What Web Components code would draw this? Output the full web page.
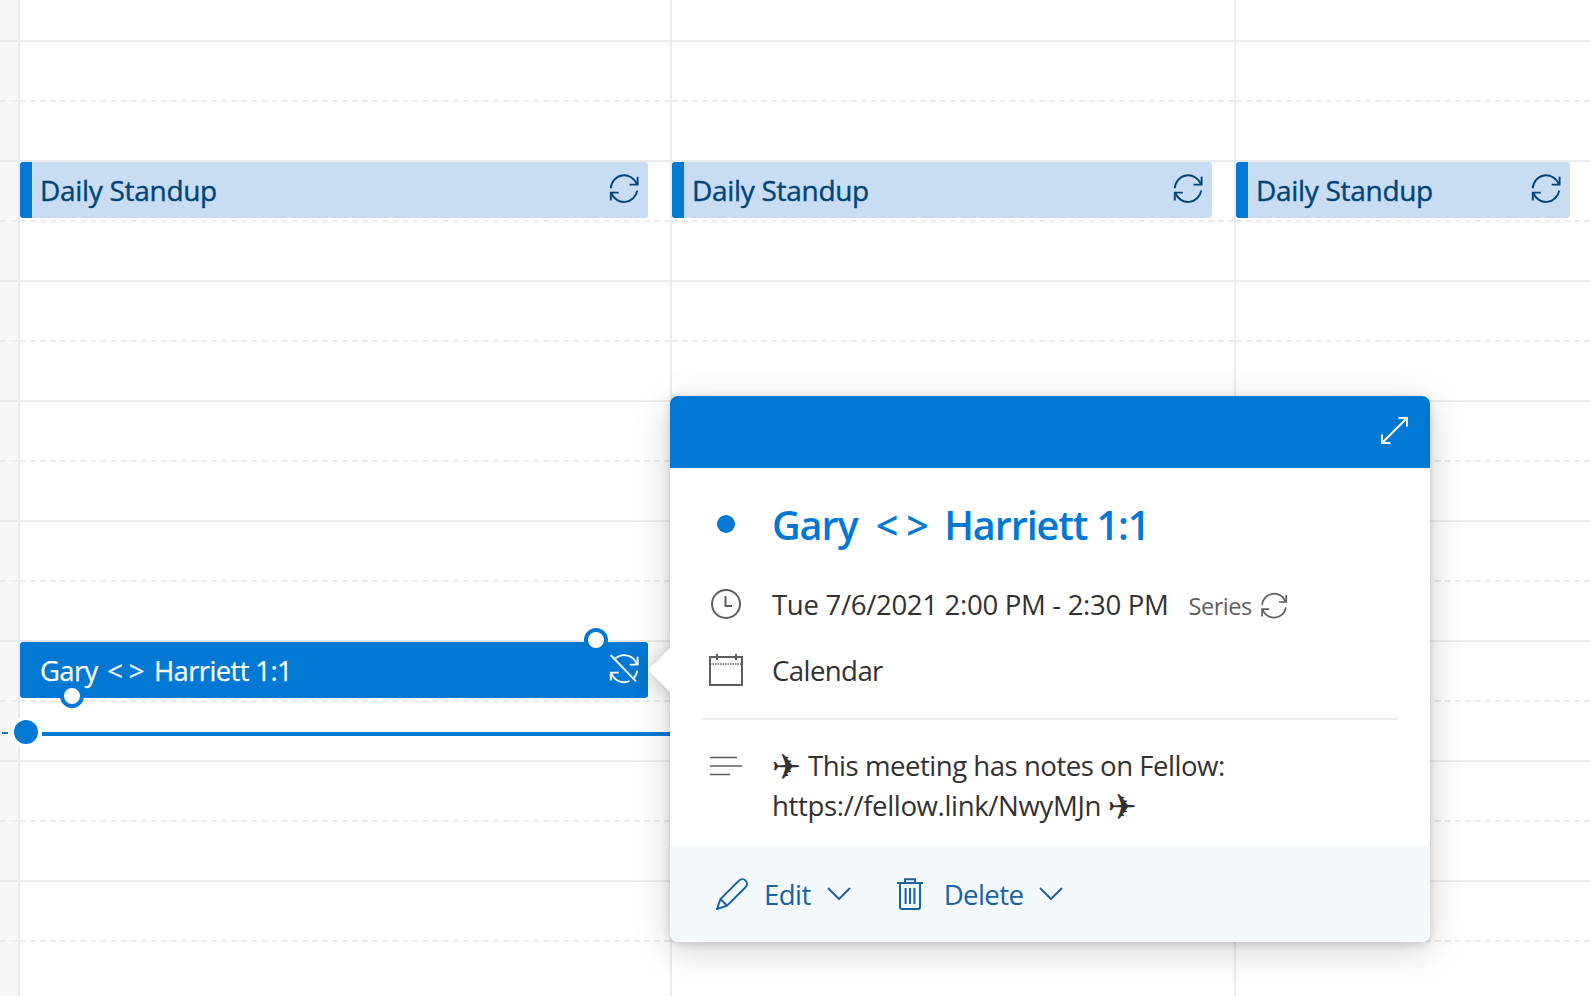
<!DOCTYPE html>
<html lang="en">
<head>
<meta charset="utf-8">
<title>Calendar</title>
<style>
html,body{margin:0;padding:0;background:#fff;height:996px;overflow:hidden;font-family:"Open Sans","Noto Sans",sans-serif;}
</style>
</head>
<body>
<cal-app>
  <cal-day slot="day" rail></cal-day>
  <cal-day slot="day" style="--gutter:22px">
    <cal-event slot="r3">Daily Standup</cal-event>
    <cal-event slot="r11" selected>Gary <span style="letter-spacing:6px;margin:0 -3px 0 3px">&lt;&gt;</span> Harriett 1:1</cal-event>
  </cal-day>
  <cal-day slot="day" style="--gutter:22px">
    <cal-event slot="r3">Daily Standup</cal-event>
  </cal-day>
  <cal-day slot="day" style="--gutter:20px" last>
    <cal-event slot="r3">Daily Standup</cal-event>
  </cal-day>
  <now-line slot="overlay"></now-line>
  <event-card slot="overlay"></event-card>
</cal-app>

<script>
const ICONS = {
  sync: `<svg viewBox="0 0 28 29" width="28" height="29" fill="none" stroke="currentColor" stroke-width="1.9" overflow="visible"><path d="M0.8 14.2A13.4 13.4 0 0 1 26.8 10.2"/><path d="M27.6 2.8V10.6H19.6"/><path d="M27.2 16.6A13.4 13.4 0 0 1 1.4 19.2"/><path d="M0.8 26.6V18.6H8.8"/></svg>`,
  syncOff: `<svg viewBox="0 0 28 29" width="28" height="29" fill="none" stroke="currentColor" stroke-width="1.9" overflow="visible"><path d="M5.4 4.4A13.4 13.4 0 0 1 26.8 10.2"/><path d="M27.6 2.8V10.6H19.6"/><path d="M27.2 16.6A13.4 13.4 0 0 1 24 23.8M19.6 27A13.4 13.4 0 0 1 1.4 19.2"/><path d="M0.8 26.6V18.6H8.8"/><path d="M0.6 1L26 27.4"/></svg>`,
  expand: `<svg viewBox="0 0 27 27" width="27" height="27" fill="none" stroke="currentColor" stroke-width="2"><path d="M17.5 1H26V9.5M1 17.5V26H9.5M1.5 25.5L25.5 1.5"/></svg>`,
  clock: `<svg viewBox="0 0 30 30" width="30" height="30" fill="none" stroke="currentColor" stroke-width="2"><circle cx="15" cy="15" r="14"/><path d="M14.5 7V17H21"/></svg>`,
  calendar: `<svg viewBox="0 0 34 32" width="34" height="32" fill="none" stroke="currentColor" stroke-width="2"><rect x="1" y="3" width="32" height="28"/><path d="M8 0V6M27 0V6"/><path d="M1 10H33" stroke-dasharray="1.5 1" stroke-width="1.5"/></svg>`,
  lines: `<svg viewBox="0 0 32 20" width="32" height="20" fill="none" stroke="currentColor" stroke-width="1.6"><path d="M0 1.5H27M0 10H32M0 18.5H20"/></svg>`,
  pencil: `<svg viewBox="0 0 32 32" width="32" height="32" fill="none" stroke="currentColor" stroke-width="2"><path d="M1 31L4.5 21L23 2.6A4.6 4.6 0 0 1 29.5 9.2L11 27.7Z"/><path d="M4.5 21L11 27.7"/></svg>`,
  trash: `<svg viewBox="0 0 26 32" width="26" height="32" fill="none" stroke="currentColor" stroke-width="2"><path d="M0 5H26"/><path d="M8 5V1.2H18V5"/><path d="M3 5V29A2 2 0 0 0 5 31H21A2 2 0 0 0 23 29V5"/><path d="M8.6 10V26M13 10V26M17.4 10V26"/></svg>`,
  chevron: `<svg viewBox="0 0 24 13" width="24" height="13" fill="none" stroke="currentColor" stroke-width="2"><path d="M1 1L12 12L23 1"/></svg>`
};

class CalIcon extends HTMLElement {
  connectedCallback(){
    if(this.shadowRoot) return;
    const r = this.attachShadow({mode:'open'});
    r.innerHTML = `<style>:host{display:inline-flex;line-height:0;flex:none}</style>${ICONS[this.getAttribute('name')]||''}`;
  }
}
customElements.define('cal-icon', CalIcon);

class CalApp extends HTMLElement {
  constructor(){
    super();
    this.attachShadow({mode:'open'}).innerHTML = `<style>
      :host{display:block;position:relative;width:1590px;height:996px;overflow:hidden;background:#fff}
      .days{display:grid;grid-template-columns:20px 652px 564px 1fr;height:100%}
    </style><div class="days"><slot name="day"></slot></div><slot name="overlay"></slot>`;
  }
}
customElements.define('cal-app', CalApp);

class CalDay extends HTMLElement {
  constructor(){
    super();
    let rows = '';
    for(let i=0;i<=16;i++){
      rows += `<div class="cell ${i%2?'dash':'solid'} ${i===0?'first':''}"><slot name="r${i}"></slot></div>`;
    }
    this.attachShadow({mode:'open'}).innerHTML = `<style>
      :host{display:block;box-sizing:border-box;min-width:0;border-right:2px solid #ebebeb;height:1002px}
      :host([rail]){background:#f8f8f8}
      :host([last]){border-right:0}
      .cell{box-sizing:border-box;height:60px;padding-right:var(--gutter,0);border-bottom:2px #ebebeb}
      .solid{border-bottom-style:solid}
      .dash{border-bottom-style:dashed}
      .first{height:42px}
    </style>${rows}`;
  }
}
customElements.define('cal-day', CalDay);

class CalEvent extends HTMLElement {
  connectedCallback(){
    if(this.shadowRoot) return;
    const sel = this.hasAttribute('selected');
    const r = this.attachShadow({mode:'open'});
    r.innerHTML = `<style>
      :host{display:flex;box-sizing:border-box;position:relative;height:56px;align-items:center;justify-content:space-between;
        border-radius:3px;background:#c8dcf4;color:#004578;border-left:12px solid #0078d4;padding:0 10px 0 8px;
        font:400 28px/36px "Open Sans","Noto Sans",sans-serif;letter-spacing:-.3px;-webkit-text-stroke:.4px currentColor}
      :host([selected]){background:#0078d4;color:#fff;font-size:27.4px;letter-spacing:-.6px;-webkit-text-stroke:.25px currentColor}
      :host([selected]) .t{margin-top:1px}
      .t{white-space:nowrap;margin-top:0}
      cal-icon{margin-top:-4px}
      .h{position:absolute;box-sizing:border-box;width:24px;height:24px;border-radius:50%;background:#fff;border:4px solid #0078d4}
      .top{right:40px;top:-14px}
      .bot{left:28px;bottom:-10px}
    </style><span class="t"><slot></slot></span><cal-icon name="${sel?'syncOff':'sync'}"></cal-icon>${sel?'<i class="h top"></i><i class="h bot"></i>':''}`;
  }
}
customElements.define('cal-event', CalEvent);

class NowLine extends HTMLElement {
  constructor(){
    super();
    this.attachShadow({mode:'open'}).innerHTML = `<style>
      :host{position:absolute;left:2px;top:720px;width:700px;height:24px;display:flex;align-items:flex-start}
      .dash{width:6px;height:2px;margin-top:12px;background:#0078d4}
      .dot{box-sizing:border-box;width:24px;height:24px;margin:0 4px 0 6px;border-radius:50%;background:#0078d4;box-shadow:0 0 0 3px #fff}
      .line{flex:1;height:4px;margin-top:12px;background:#0078d4}
    </style><i class="dash"></i><i class="dot"></i><i class="line"></i>`;
  }
}
customElements.define('now-line', NowLine);

class EventCard extends HTMLElement {
  constructor(){
    super();
    this.attachShadow({mode:'open'}).innerHTML = `<style>
      :host{position:absolute;left:670px;top:396px;width:760px;height:546px;display:block;color:#323130;
        font:400 27.6px/40px "Open Sans","Noto Sans","DejaVu Sans",sans-serif;letter-spacing:-.6px}
      .beak{position:absolute;left:-22px;top:252px;width:44px;height:44px;background:#fff;
        transform:rotate(45deg) scale(.707);box-shadow:0 4px 26px rgba(0,0,0,.2)}
      .panel{position:relative;height:100%;display:flex;flex-direction:column;border-radius:8px;overflow:hidden;background:#fff}
      .shadow{position:absolute;inset:0;border-radius:8px;box-shadow:0 8px 36px rgba(0,0,0,.18),0 2px 8px rgba(0,0,0,.14)}
      header{flex:none;height:72px;box-sizing:border-box;background:#0078d4;color:#fff;display:flex;justify-content:flex-end;padding:21px 22px 0 0}
      .body{flex:1;padding:30px 32px 0}
      .row{display:flex;align-items:flex-start;gap:22px}
      .ic{flex:none;width:48px;height:40px;display:flex;align-items:center;justify-content:center;color:#605e5c}
      .title{height:54px;font-size:39.6px;line-height:54px;font-weight:600;color:#0078d4;letter-spacing:-1.1px;white-space:nowrap}
      .title span{letter-spacing:8px;margin:0 -2px 0 9px}
      .dot{width:18px;height:18px;border-radius:50%;background:#0078d4;margin-top:-2px}
      .r1 .ic{height:54px}
      .r2{margin-top:32px;letter-spacing:-.33px}
      .r3{margin-top:24px}
      .div{height:2px;background:#ebebeb;margin-top:28px}
      .r4{margin-top:25px}
      .r4 .ic{height:24px;padding-top:9px}
      .plane{font:700 35px/0 "DejaVu Sans",sans-serif;letter-spacing:0;vertical-align:-3px}
      .series{font-size:23.6px;color:#605e5c;margin-left:20px;letter-spacing:-.5px;display:inline-flex;align-items:center;gap:8px}
      .series cal-icon{color:#605e5c;margin-top:-2px}
      .notes div{height:40px;white-space:nowrap;letter-spacing:-.5px}
      .notes div+div{letter-spacing:-.37px}
      footer{flex:none;height:96px;box-sizing:border-box;background:#f4f9fd;color:#1a62a6;display:flex;align-items:center;padding:0 0 0 46px}
      footer .t{margin:0 16px 0 16px}
      footer .d{margin-left:46px}
      footer .t2{margin:0 16px 0 21px}
      footer cal-icon:nth-of-type(n){margin-top:-1px}
    </style>
    <i class="shadow"></i><i class="beak"></i>
    <div class="panel">
      <header><cal-icon name="expand"></cal-icon></header>
      <div class="body">
        <div class="row r1"><span class="ic"><i class="dot"></i></span><span class="title">Gary <span>&lt;&gt;</span> Harriett 1:1</span></div>
        <div class="row r2"><span class="ic"><cal-icon name="clock"></cal-icon></span><span>Tue 7/6/2021 2:00 PM - 2:30 PM<span class="series">Series <cal-icon name="sync" style="transform:scale(.9)"></cal-icon></span></span></div>
        <div class="row r3"><span class="ic"><cal-icon name="calendar"></cal-icon></span><span>Calendar</span></div>
        <div class="div"></div>
        <div class="row r4"><span class="ic"><cal-icon name="lines"></cal-icon></span><span class="notes"><div><span class="plane">✈</span> This meeting has notes on Fellow:</div><div>https://fellow.link/NwyMJn <span class="plane">✈</span></div></span></div>
      </div>
      <footer>
        <cal-icon name="pencil"></cal-icon><span class="t">Edit</span><cal-icon name="chevron"></cal-icon>
        <cal-icon class="d" name="trash"></cal-icon><span class="t2">Delete</span><cal-icon name="chevron"></cal-icon>
      </footer>
    </div>`;
  }
}
customElements.define('event-card', EventCard);
</script>
</body>
</html>
